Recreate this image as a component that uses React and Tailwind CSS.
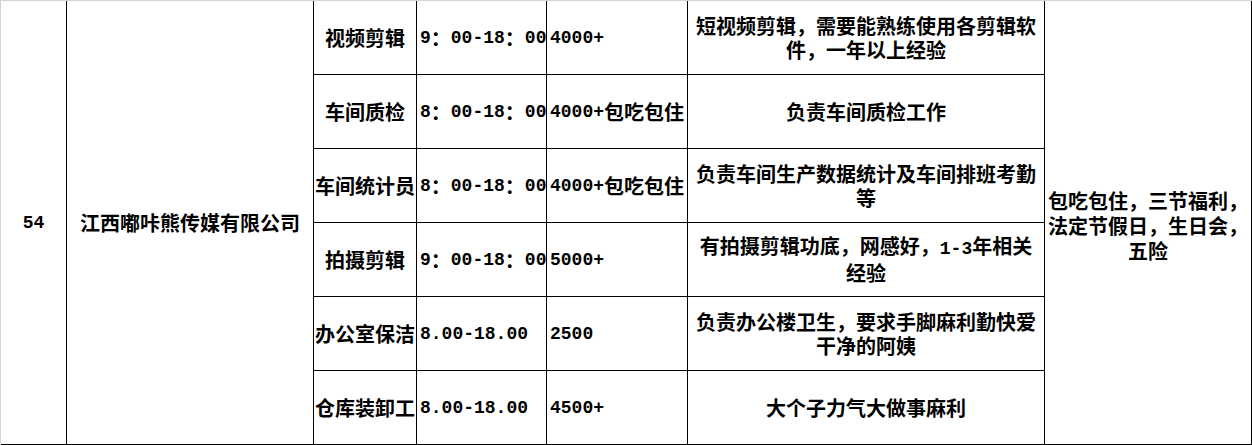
import React from "react";

const jobs = [
  {
    name: "视频剪辑",
    time: "9：00-18：00",
    pay: "4000+",
    desc: ["短视频剪辑，需要能熟练使用各剪辑软", "件，一年以上经验"],
  },
  {
    name: "车间质检",
    time: "8：00-18：00",
    pay: "4000+包吃包住",
    desc: ["负责车间质检工作"],
  },
  {
    name: "车间统计员",
    time: "8：00-18：00",
    pay: "4000+包吃包住",
    desc: ["负责车间生产数据统计及车间排班考勤", "等"],
  },
  {
    name: "拍摄剪辑",
    time: "9：00-18：00",
    pay: "5000+",
    desc: ["有拍摄剪辑功底，网感好，1-3年相关", "经验"],
  },
  {
    name: "办公室保洁",
    time: "8.00-18.00",
    pay: "2500",
    desc: ["负责办公楼卫生，要求手脚麻利勤快爱", "干净的阿姨"],
  },
  {
    name: "仓库装卸工",
    time: "8.00-18.00",
    pay: "4500+",
    desc: ["大个子力气大做事麻利"],
  },
];

// latin runs get a half-width mono face, like the sheet's SimSun digits
const Mixed = ({ text }) =>
  text.split(/([\x20-\x7e]+)/).map((part, i) =>
    /^[\x20-\x7e]+$/.test(part) ? (
      <span key={i} className="[font-family:'Liberation_Mono',monospace] text-[18px]">
        {part}
      </span>
    ) : (
      <React.Fragment key={i}>{part}</React.Fragment>
    )
  );

const cell = "border-r border-b border-black flex items-center";

const App = () => {
  return (
    <div className="w-[1252px] h-[445px] bg-white border-t border-l border-[#d4d4d4] text-black font-bold text-[20px] leading-[24px] overflow-hidden [font-family:'Noto_Sans_CJK_SC',sans-serif]">
      <div className="grid grid-cols-[66px_247px_103px_130px_141px_357px_207px] grid-rows-[repeat(6,74px)]">
        <div className={`${cell} col-start-1 row-start-1 row-span-6 justify-center`}>
          <Mixed text="54" />
        </div>
        <div className={`${cell} col-start-2 row-start-1 row-span-6 justify-center`}>
          江西嘟咔熊传媒有限公司
        </div>
        {jobs.map((job, i) => (
          <React.Fragment key={i}>
            <div className={`${cell} col-start-3 justify-center whitespace-nowrap`}>
              {job.name}
            </div>
            <div className={`${cell} col-start-4 pl-[3px] whitespace-nowrap`}>
              <Mixed text={job.time} />
            </div>
            <div className={`${cell} col-start-5 pl-[3px] whitespace-nowrap`}>
              <Mixed text={job.pay} />
            </div>
            <div className={`${cell} col-start-6 flex-col justify-center`}>
              {job.desc.map((line, j) => (
                <div key={j} className="text-center whitespace-nowrap">
                  <Mixed text={line} />
                </div>
              ))}
            </div>
          </React.Fragment>
        ))}
        <div className={`${cell} col-start-7 row-start-1 row-span-6 flex-col justify-center pt-[6px] leading-[25px]`}>
          <div className="text-center whitespace-nowrap">包吃包住，三节福利，</div>
          <div className="text-center whitespace-nowrap">法定节假日，生日会，</div>
          <div className="text-center whitespace-nowrap">五险</div>
        </div>
      </div>
    </div>
  );
};

export default App;
